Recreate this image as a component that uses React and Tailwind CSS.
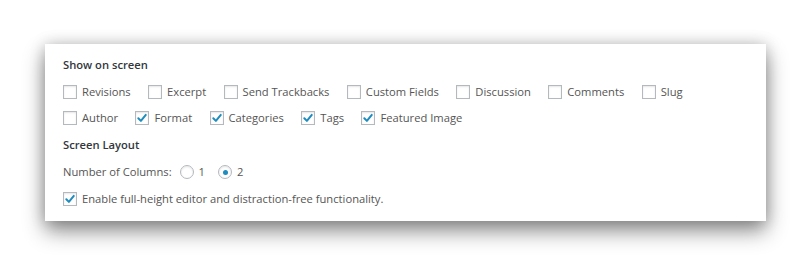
import React from "react";

const font = { fontFamily: '"Open Sans", "Noto Sans", Arial, sans-serif' };

function Box({ checked }) {
  return (
    <span className="relative flex h-[14px] w-[14px] shrink-0 items-center justify-center border border-[#b4b9be] bg-white shadow-[inset_0_1px_2px_rgba(0,0,0,0.1)]">
      {checked && (
        <svg width="12" height="12" viewBox="0 0 12 12" className="block">
          <path d="M2.3 6.2 L4.9 8.9 L9.8 2.9" fill="none" stroke="#1e8cbe" strokeWidth="2" strokeLinecap="round" strokeLinejoin="round" />
        </svg>
      )}
    </span>
  );
}

function Check({ label, checked }) {
  return (
    <label className="flex items-center gap-[5px]">
      <Box checked={checked} />
      <span>{label}</span>
    </label>
  );
}

function Radio({ label, checked }) {
  return (
    <label className="flex items-center gap-[5px]">
      <span className="flex h-[14px] w-[14px] shrink-0 items-center justify-center rounded-full border border-[#b4b9be] bg-white shadow-[inset_0_1px_2px_rgba(0,0,0,0.1)]">
        {checked && <span className="h-[5px] w-[5px] rounded-full bg-[#1e8cbe]" />}
      </span>
      <span>{label}</span>
    </label>
  );
}

export default function App() {
  const row1 = ["Revisions", "Excerpt", "Send Trackbacks", "Custom Fields", "Discussion", "Comments", "Slug"];
  const row2 = [
    ["Author", false],
    ["Format", true],
    ["Categories", true],
    ["Tags", true],
    ["Featured Image", true],
  ];
  return (
    <div className="h-[267px] w-[811px] bg-white pl-[45px] pt-[44px]" style={font}>
      <div className="flex w-[721px] flex-col bg-white pb-[8px] pl-[18px] pt-[8px] text-[11.2px] text-[#555] shadow-[0_10px_20px_rgba(0,0,0,0.45),0_0_14px_rgba(0,0,0,0.18)]">
        <div className="flex h-[27px] items-center font-semibold text-[#32373c]">Show on screen</div>
        <div className="flex h-[26px] items-center gap-[17.4px]">
          {row1.map((l) => (
            <Check key={l} label={l} />
          ))}
        </div>
        <div className="flex h-[27px] items-center gap-[17.4px]">
          {row2.map(([l, c]) => (
            <Check key={l} label={l} checked={c} />
          ))}
        </div>
        <div className="flex h-[27px] items-center font-semibold text-[#32373c]">Screen Layout</div>
        <div className="flex h-[27px] items-center">
          <span className="mr-[8px]">Number of Columns:</span>
          <div className="flex items-center gap-[13px]">
            <Radio label="1" />
            <Radio label="2" checked />
          </div>
        </div>
        <div className="flex h-[27px] items-center">
          <Check label="Enable full-height editor and distraction-free functionality." checked />
        </div>
      </div>
    </div>
  );
}
